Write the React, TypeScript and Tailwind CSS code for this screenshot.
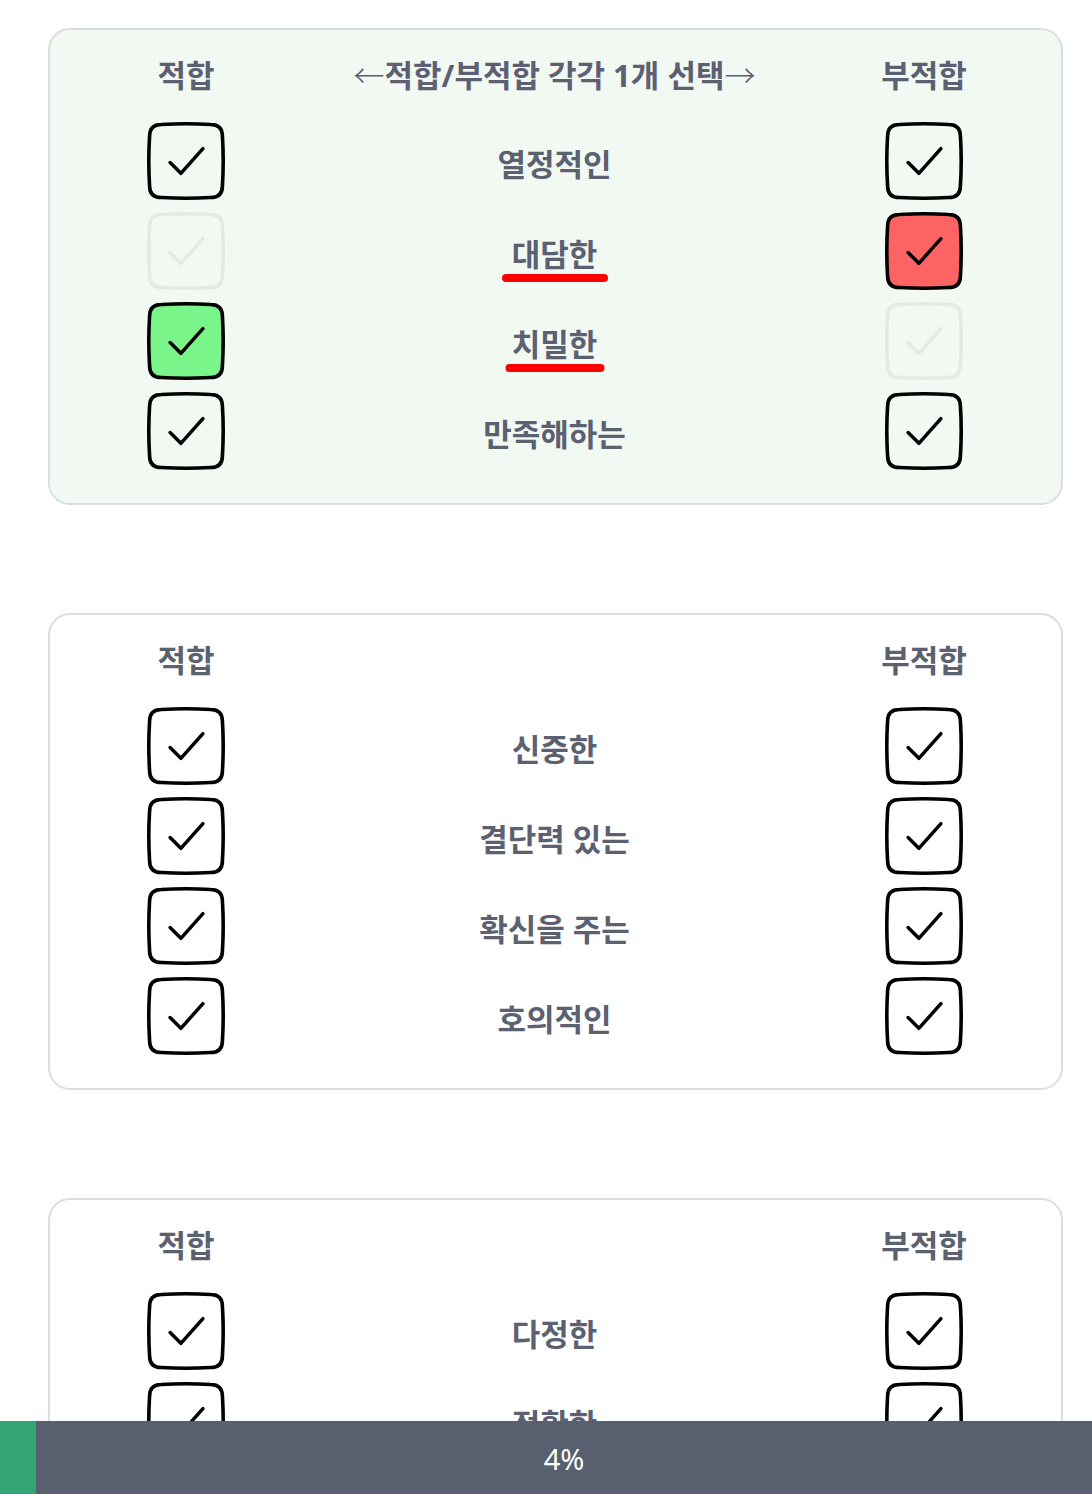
import React from "react"

type Mark = "on" | "faded" | "green" | "red"

interface Row {
  word: string
  left: Mark
  right: Mark
  underline?: number
}

interface Group {
  rows: Row[]
  active?: boolean
}

const groups: Group[] = [
  {
    active: true,
    rows: [
      { word: "열정적인", left: "on", right: "on" },
      { word: "대담한", left: "faded", right: "red", underline: 106 },
      { word: "치밀한", left: "green", right: "faded", underline: 99 },
      { word: "만족해하는", left: "on", right: "on" },
    ],
  },
  {
    rows: [
      { word: "신중한", left: "on", right: "on" },
      { word: "결단력 있는", left: "on", right: "on" },
      { word: "확신을 주는", left: "on", right: "on" },
      { word: "호의적인", left: "on", right: "on" },
    ],
  },
  {
    rows: [
      { word: "다정한", left: "on", right: "on" },
      { word: "정확한", left: "on", right: "on" },
      { word: "활기찬", left: "on", right: "on" },
      { word: "겸손한", left: "on", right: "on" },
    ],
  },
]

const box =
  "M14 2.5 Q38 1 62 2.5 Q73.5 2.5 73.5 14 Q75 38 73.5 62 Q73.5 73.5 62 73.5 Q38 75 14 73.5 Q2.5 73.5 2.5 62 Q1 38 2.5 14 Q2.5 2.5 14 2.5 Z"

const CheckBox = ({ mark }: { mark: Mark }) => {
  const fill = mark === "green" ? "#79f589" : mark === "red" ? "#fe6363" : "none"
  const stroke = mark === "faded" ? "#e4e9e4" : "#000"
  return (
    <svg width="78" height="78" viewBox="0 0 76 76" className="block">
      <path d={box} fill={fill} stroke={stroke} strokeWidth="3.5" strokeLinejoin="round" />
      <path d="M22.5 39.5 L33 50 L54.5 26" fill="none" stroke={stroke} strokeWidth="3.4" strokeLinecap="round" strokeLinejoin="round" />
    </svg>
  )
}

const Card = ({ group, first }: { group: Group; first: boolean }) => {
  return (
    <div
      className={`ml-[48px] w-[1015px] rounded-[22px] border-2 border-[#dcdde1] pt-[23px] pb-[33px] ${
        group.active ? "bg-[#f2f8f2]" : "bg-white"
      }`}
    >
      <div className="grid grid-cols-[272px_1fr_274px] h-[42px] items-center text-[31px] font-bold text-[#5b6170] -mt-[1px]">
        <div className="text-center">적합</div>
        <div className="text-center text-[#5e5f73]">
          {first && (
            <>
              <span className="font-light">←</span>적합/부적합 각각 1개 선택<span className="font-light">→</span>
            </>
          )}
        </div>
        <div className="text-center">부적합</div>
      </div>
      <div className="mt-[28px] flex flex-col gap-[12px]">
        {group.rows.map((row) => (
          <div key={row.word} className="grid grid-cols-[272px_1fr_274px] items-center">
            <div className="flex justify-center">
              <CheckBox mark={row.left} />
            </div>
            <div className="flex justify-center pt-[6px]">
              <span className="relative text-[31px] font-bold text-[#5b6170] leading-[40px]">
                {row.word}
                {row.underline && (
                  <span
                    className="absolute left-1/2 -translate-x-1/2 top-[40px] h-[8px] rounded-full bg-[#ff0000]"
                    style={{ width: row.underline }}
                  />
                )}
              </span>
            </div>
            <div className="flex justify-center">
              <CheckBox mark={row.right} />
            </div>
          </div>
        ))}
      </div>
    </div>
  )
}

export default function App() {
  return (
    <div className="min-h-screen bg-white pt-[28px] pb-[120px]" style={{ fontFamily: '"Noto Sans", "Noto Sans CJK KR", sans-serif' }}>
      <div className="flex flex-col gap-[108px]">
        {groups.map((g, i) => (
          <Card key={i} group={g} first={i === 0} />
        ))}
      </div>
      <div className="fixed bottom-0 left-0 right-0 h-[73px] flex bg-[#585f6e]">
        <div className="w-[36px] h-full bg-[#33a474]" />
        <div className="flex-1 flex items-center justify-center text-white text-[29px] pt-[2px]">4%</div>
      </div>
    </div>
  )
}
